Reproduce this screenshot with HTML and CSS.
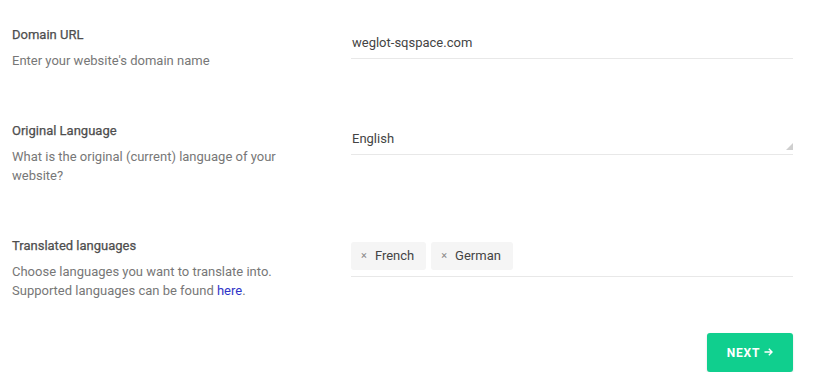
FILE: index.html
```html
<!DOCTYPE html>
<html>
<head>
<meta charset="utf-8">
<link rel="stylesheet" href="styles.css">
</head>
<body>
<div class="form">
  <div class="row">
    <div class="info">
      <div class="label">Domain URL</div>
      <div class="desc">Enter your website's domain name</div>
    </div>
    <div class="field">
      <div class="input">weglot-sqspace.com</div>
    </div>
  </div>
  <div class="row">
    <div class="info">
      <div class="label">Original Language</div>
      <div class="desc">What is the original (current) language of your website?</div>
    </div>
    <div class="field">
      <div class="input select">English<span class="grip"></span></div>
    </div>
  </div>
  <div class="row">
    <div class="info">
      <div class="label">Translated languages</div>
      <div class="desc">Choose languages you want to translate into. Supported languages can be found <a href="#" class="link">here</a>.</div>
    </div>
    <div class="field">
      <div class="tags">
        <span class="tag"><span class="x">×</span>French</span>
        <span class="tag"><span class="x">×</span>German</span>
      </div>
    </div>
  </div>
  <div class="actions">
    <button class="next">NEXT<svg class="arrow" width="9" height="8" viewBox="0 0 9 8"><path d="M0.5 4H8M4.8 0.8L8 4L4.8 7.2" fill="none" stroke="#fff" stroke-width="1.4"/></svg></button>
  </div>
</div>
</body>
</html>
```

FILE: styles.css
```css
* { box-sizing: border-box; }
html, body { margin: 0; padding: 0; background: #fff; }
body {
  font-family: Roboto, "Noto Sans", "Liberation Sans", sans-serif;
  font-size: 13px;
  color: #555;
}
.form {
  padding: 26px 22px 0 12px;
  display: flex;
  flex-direction: column;
  gap: 52px;
}
.row {
  display: grid;
  grid-template-columns: 339px 1fr;
  align-items: start;
}
.info { width: 290px; }
.label {
  font-weight: 400;
  color: #4e4e4e;
  line-height: 18px;
  -webkit-text-stroke: 0.25px #4e4e4e;
}
.desc {
  margin-top: 7px;
  color: #777;
  line-height: 19px;
}
.link { color: #2f35c8; text-decoration: none; }
.input {
  position: relative;
  padding: 7px 0 5px 1px;
  line-height: 20px;
  font-size: 13px;
  color: #444;
  border-bottom: 1px solid #e8e8e8;
}
.select { padding-top: 7px; padding-bottom: 5px; }
.grip {
  position: absolute;
  right: 0;
  bottom: 4px;
  width: 0;
  height: 0;
  border-left: 7px solid transparent;
  border-bottom: 7px solid #cfcfcf;
}
.tags {
  display: flex;
  gap: 5px;
  padding: 5px 0 6px;
  border-bottom: 1px solid #e8e8e8;
}
.tag {
  display: inline-flex;
  align-items: center;
  height: 28px;
  padding: 0 12px 0 10px;
  background: #f5f5f5;
  border-radius: 3px;
  color: #444;
  line-height: 20px;
}
.x {
  font-size: 11px;
  color: #888;
  margin-right: 8px;
}
.actions {
  display: flex;
  justify-content: flex-end;
  margin-top: -19px;
}
.next {
  display: inline-flex;
  align-items: center;
  justify-content: center;
  gap: 4px;
  width: 86px;
  height: 39px;
  border: none;
  border-radius: 3px;
  background: #10cf8e;
  color: #fff;
  font-family: Roboto, "Liberation Sans", sans-serif;
  font-weight: 700;
  font-size: 12px;
  letter-spacing: 0.8px;
  box-shadow: 0 1px 2px rgba(0,0,0,0.15);
  padding: 0;
}
.arrow { display: block; margin-top: -1px; }
```
